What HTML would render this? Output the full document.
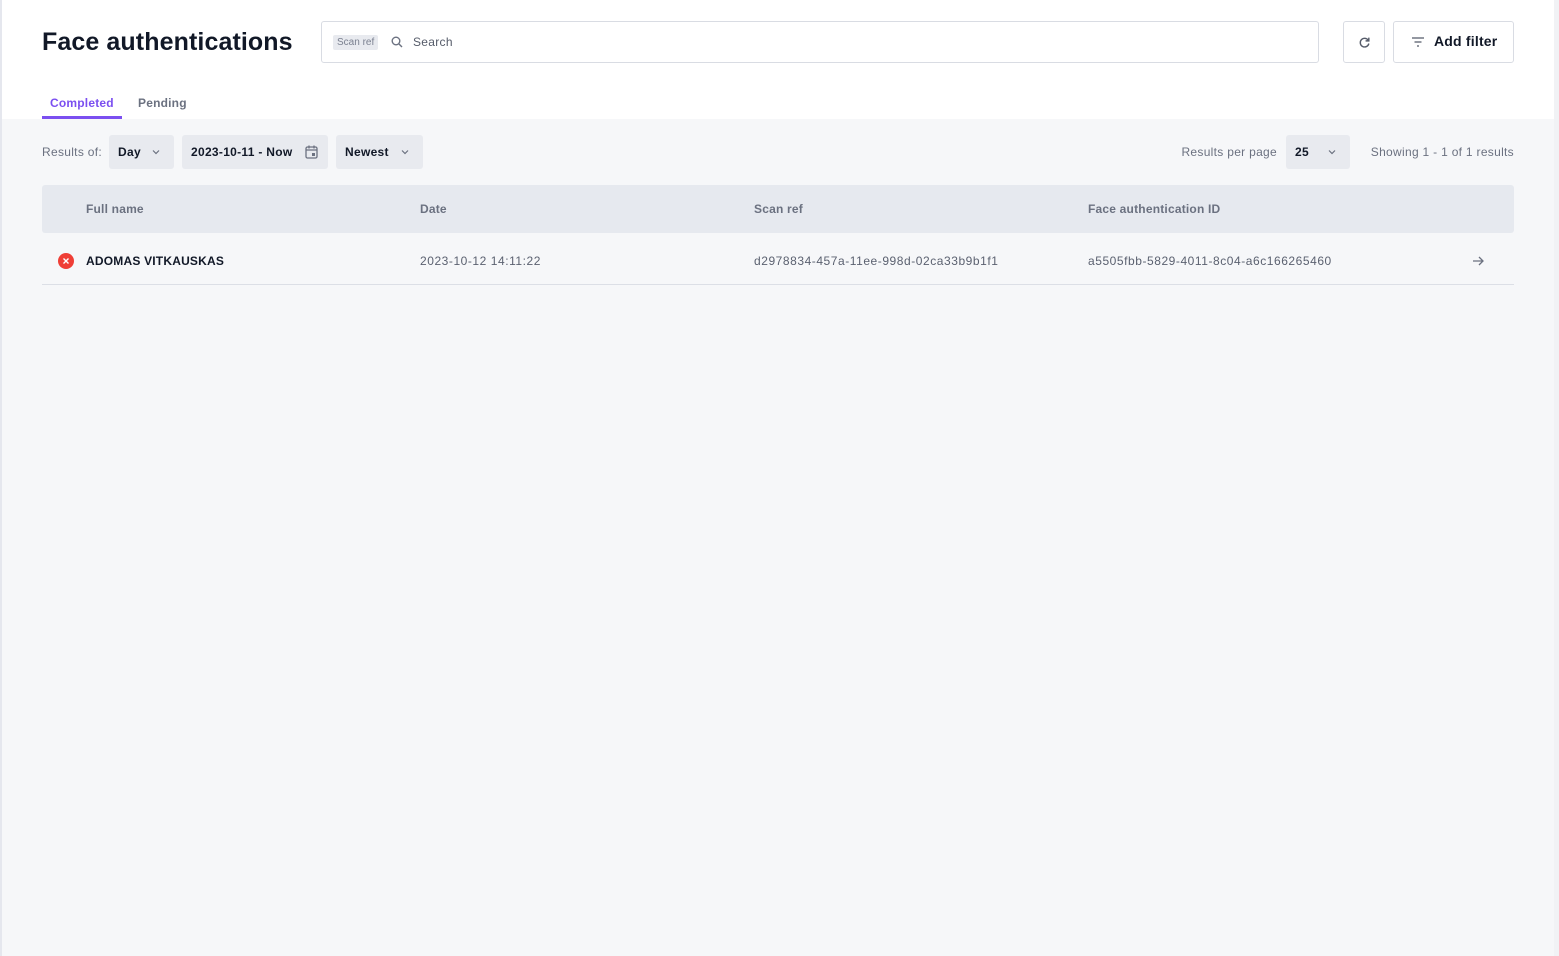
<!DOCTYPE html>
<html><head><meta charset="utf-8"><style>
*{box-sizing:border-box;margin:0;padding:0}
body{width:1559px;height:956px;background:#f6f7f9;font-family:"Liberation Sans",sans-serif;position:relative;overflow:hidden;color:#111827}
.lb{position:absolute;left:0;top:0;width:2px;height:956px;background:#e5e7ee}
.rb{position:absolute;right:0;top:0;width:5px;height:956px;background:#f1f2f5}
.top{position:absolute;left:2px;top:0;width:1552px;height:119px;background:#fff}
h1{position:absolute;left:42px;top:28px;font-size:25px;font-weight:700;letter-spacing:0.1px}
.search{position:absolute;left:321px;top:21px;width:998px;height:42px;border:1px solid #d9dce3;border-radius:3px}
.tag{position:absolute;left:11px;top:13px;background:#e8eaef;color:#7b8190;font-size:10px;padding:2px 4px;border-radius:2px}
.st{position:absolute;left:91px;top:13px;font-size:12px;color:#555b69;letter-spacing:0.3px}
.btn{position:absolute;top:21px;height:42px;border:1px solid #d9dce3;border-radius:3px;background:#fff}
.tabs{position:absolute;top:96px;font-size:12px;font-weight:700;letter-spacing:0.2px}
.sel{position:absolute;top:135px;height:34px;background:#e8eaef;border-radius:3px;font-size:12px;font-weight:700;line-height:34px;padding-left:9px;letter-spacing:0.3px}
.lbl{position:absolute;top:145px;font-size:12px;color:#6b7180;letter-spacing:0.3px}
.thead{position:absolute;left:42px;top:185px;width:1472px;height:48px;background:#e6e9ef;border-radius:3px}
.th{position:absolute;top:202px;font-size:12px;font-weight:700;color:#6b7180;letter-spacing:0.2px}
.td{position:absolute;top:254px;font-size:12px;color:#5b6170;letter-spacing:0.55px}
.line{position:absolute;left:42px;top:284px;width:1472px;height:1px;background:#dcdfe6}
.chev{position:absolute;top:14px}
</style></head><body>
<div class="top"></div><div class="lb"></div><div class="rb"></div>
<h1>Face authentications</h1>
<div class="search"><span class="tag">Scan ref</span>
<svg style="position:absolute;left:69px;top:14px" width="12" height="12" viewBox="0 0 12 12"><circle cx="5" cy="5" r="3.8" fill="none" stroke="#6b7180" stroke-width="1.4"/><path d="M8 8l3 3" stroke="#6b7180" stroke-width="1.4"/></svg>
<span class="st">Search</span></div>
<div class="btn" style="left:1343px;width:42px"><svg style="position:absolute;left:14px;top:14px" width="13" height="13" viewBox="0 0 12 12"><path d="M9.5 4A4 4 0 1 0 10 7" fill="none" stroke="#555b69" stroke-width="1.3"/><path d="M10 1.5V4.5H7" fill="none" stroke="#555b69" stroke-width="1.3"/></svg></div>
<div class="btn" style="left:1393px;width:121px"><svg style="position:absolute;left:18px;top:15px" width="12" height="10" viewBox="0 0 12 10"><path d="M0 1h12M2.5 5h7M5 9h2" stroke="#555b69" stroke-width="1.2"/></svg><span style="position:absolute;left:40px;top:11px;font-size:14px;font-weight:700;letter-spacing:0.2px">Add filter</span></div>
<div class="tabs" style="left:50px;color:#7b4ff0">Completed</div>
<div style="position:absolute;left:42px;top:116px;width:80px;height:3px;background:#7b4ff0"></div>
<div class="tabs" style="left:138px;color:#6b7180">Pending</div>
<div class="lbl" style="left:42px">Results of:</div>
<div class="sel" style="left:109px;width:65px">Day<svg class="chev" style="left:43px" width="8" height="6" viewBox="0 0 8 6"><path d="M1 1.5l3 3 3-3" fill="none" stroke="#6b7180" stroke-width="1.2"/></svg></div>
<div class="sel" style="left:182px;width:146px">2023-10-11 - Now<svg style="position:absolute;left:123px;top:10px" width="13" height="14" viewBox="0 0 13 14"><rect x="1" y="2" width="11" height="11" rx="1.5" fill="none" stroke="#6b7180" stroke-width="1.3"/><path d="M1 5h11M4 0.5v3M9 0.5v3" stroke="#6b7180" stroke-width="1.3"/><rect x="7" y="8" width="3" height="3" fill="#6b7180"/></svg></div>
<div class="sel" style="left:336px;width:87px">Newest<svg class="chev" style="left:65px" width="8" height="6" viewBox="0 0 8 6"><path d="M1 1.5l3 3 3-3" fill="none" stroke="#6b7180" stroke-width="1.2"/></svg></div>
<div class="lbl" style="right:282px">Results per page</div>
<div class="sel" style="left:1286px;width:64px">25<svg class="chev" style="left:42px" width="8" height="6" viewBox="0 0 8 6"><path d="M1 1.5l3 3 3-3" fill="none" stroke="#6b7180" stroke-width="1.2"/></svg></div>
<div class="lbl" style="right:45px">Showing 1 - 1 of 1 results</div>
<div class="thead"></div>
<div class="th" style="left:86px">Full name</div>
<div class="th" style="left:420px">Date</div>
<div class="th" style="left:754px">Scan ref</div>
<div class="th" style="left:1088px">Face authentication ID</div>
<svg style="position:absolute;left:58px;top:253px" width="16" height="16" viewBox="0 0 16 16"><circle cx="8" cy="8" r="8" fill="#ef3e36"/><path d="M5.5 5.5l5 5M10.5 5.5l-5 5" stroke="#fff" stroke-width="1.4"/></svg>
<div class="td" style="left:86px;font-weight:700;color:#111827;letter-spacing:0.2px">ADOMAS VITKAUSKAS</div>
<div class="td" style="left:420px">2023-10-12 14:11:22</div>
<div class="td" style="left:754px">d2978834-457a-11ee-998d-02ca33b9b1f1</div>
<div class="td" style="left:1088px">a5505fbb-5829-4011-8c04-a6c166265460</div>
<svg style="position:absolute;left:1472px;top:256px" width="12" height="10" viewBox="0 0 12 10"><path d="M1 5h10M7 1l4 4-4 4" fill="none" stroke="#6b7180" stroke-width="1.3"/></svg>
<div class="line"></div>
</body></html>
